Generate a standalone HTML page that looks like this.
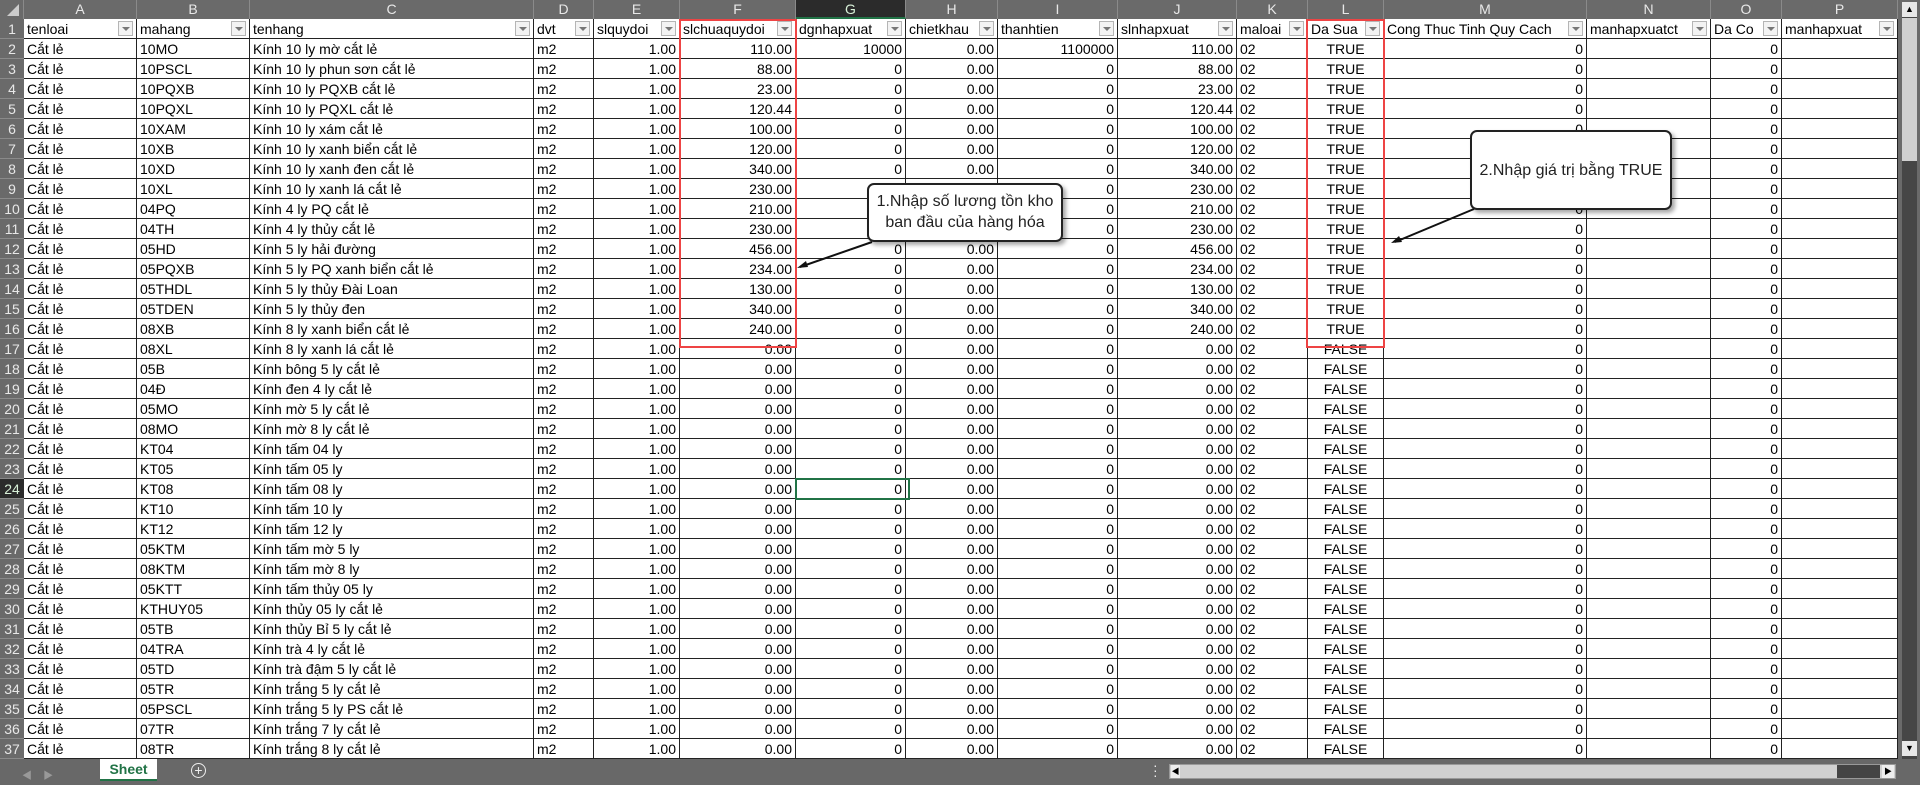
<!DOCTYPE html>
<html><head><meta charset="utf-8">
<style>
body{margin:0;width:1920px;height:785px;overflow:hidden;background:#fff;position:relative;font-family:"Liberation Sans","Noto Sans CJK SC",sans-serif;}
.c{position:absolute;box-sizing:border-box;height:20px;line-height:20px;font-size:14px;color:#000;white-space:nowrap;overflow:hidden;padding:0 3px;border-right:1px solid #222;border-bottom:1px solid #222;}
.r{text-align:right}.m{text-align:center}
.ch{position:absolute;top:0;height:19px;line-height:19px;background:#6a6a6a;color:#e8e8e8;font-size:14px;text-align:center;box-sizing:border-box;border-right:1px solid #8a8a8a;font-family:"Liberation Sans",sans-serif}
.rh{position:absolute;left:0;width:24px;height:20px;line-height:20px;background:#6a6a6a;color:#e8e8e8;font-size:14px;text-align:center;box-sizing:border-box;border-bottom:1px solid #8a8a8a;font-family:"Liberation Sans",sans-serif}
.fb{position:absolute;top:2px;width:15px;height:15px;border:1px solid #b5b5b5;background:#f3f3f3;box-sizing:border-box}
.fb:after{content:"";position:absolute;left:3px;top:5px;border-left:4px solid transparent;border-right:4px solid transparent;border-top:4px solid #777}
.call{position:absolute;background:#fff;border:2px solid #222;border-radius:7px;box-shadow:3px 3px 4px rgba(0,0,0,.35);font-family:"Liberation Sans",sans-serif;font-size:16px;color:#222;text-align:center;box-sizing:border-box}
</style></head><body>
<div id="g"></div>
<div style="position:absolute;left:679px;top:19px;width:118px;height:329px;border:2px solid #ee4444;box-sizing:border-box"></div>
<div style="position:absolute;left:1306px;top:19px;width:79px;height:329px;border:2px solid #ee4444;box-sizing:border-box"></div>
<div style="position:absolute;left:795px;top:478px;width:115px;height:22px;border:2px solid #217346;box-sizing:border-box"></div>
<svg style="position:absolute;left:0;top:0" width="1920" height="785">
<line x1="872" y1="242" x2="800" y2="267" stroke="#111" stroke-width="2"/>
<polygon points="797,268 806,261 808,267" fill="#111"/>
<line x1="1474" y1="209" x2="1395" y2="242" stroke="#111" stroke-width="2"/>
<polygon points="1391,243 1399,236 1402,242" fill="#111"/>
</svg>
<div class="call" style="left:867px;top:183px;width:196px;height:59px;padding-top:6px;line-height:21px">1.Nhập số lương tồn kho<br>ban đầu của hàng hóa</div>
<div class="call" style="left:1470px;top:130px;width:202px;height:80px;line-height:78px">2.Nhập giá trị bằng TRUE</div>
<div style="position:absolute;left:0;top:759px;width:1920px;height:26px;background:#686868"></div>
<div style="position:absolute;left:22px;top:767px;color:#999;font-size:10px">&#9664;&nbsp;&nbsp;&nbsp;&nbsp;&#9654;</div>
<div style="position:absolute;left:100px;top:759px;width:57px;height:22px;background:#fff;border-bottom:2px solid #217346;box-sizing:border-box;color:#217346;font-weight:bold;font-size:14px;text-align:center;line-height:20px;font-family:'Liberation Sans',sans-serif">Sheet</div>
<div style="position:absolute;left:191px;top:763px;width:13px;height:13px;border:1.5px solid #eee;border-radius:50%;color:#eee;font-size:14px;line-height:13px;text-align:center;font-family:'Liberation Sans',sans-serif">+</div>
<div style="position:absolute;left:1153px;top:763px;color:#eee;font-size:14px;line-height:5px">·<br>·<br>·</div>
<div style="position:absolute;left:1169px;top:764px;width:727px;height:15px;background:#d0d0d0;border:1px solid #999;box-sizing:border-box"></div>
<div style="position:absolute;left:1837px;top:765px;width:43px;height:13px;background:#444"></div>
<div style="position:absolute;left:1171px;top:765px;width:9px;height:13px;background:#eee;font-size:8px;line-height:13px;text-align:center">&#9664;</div>
<div style="position:absolute;left:1882px;top:765px;width:12px;height:13px;background:#eee;font-size:8px;line-height:13px;text-align:center">&#9654;</div>
<div style="position:absolute;left:1898px;top:0;width:22px;height:759px;background:#6a6a6a"></div>
<div style="position:absolute;left:1902px;top:2px;width:15px;height:757px;background:#464646"></div>
<div style="position:absolute;left:1902px;top:2px;width:15px;height:15px;background:#e8e8e8;font-size:9px;line-height:15px;text-align:center">&#9650;</div>
<div style="position:absolute;left:1902px;top:18px;width:15px;height:143px;background:#d0d0d0"></div>
<div style="position:absolute;left:1902px;top:741px;width:15px;height:15px;background:#e8e8e8;font-size:9px;line-height:15px;text-align:center">&#9660;</div>
<script>
var X=[24,137,250,534,594,680,796,906,998,1118,1237,1308,1384,1587,1711,1782,1898];
var L="ABCDEFGHIJKLMNOP";
var H=["tenloai","mahang","tenhang","dvt","slquydoi","slchuaquydoi","dgnhapxuat","chietkhau","thanhtien","slnhapxuat","maloai","Da Sua","Cong Thuc Tinh Quy Cach","manhapxuatct","Da Co","manhapxuat"];
var D=[["10MO","Kính 10 ly mờ cắt lẻ","110.00"],["10PSCL","Kính 10 ly phun sơn cắt lẻ","88.00"],["10PQXB","Kính 10 ly PQXB cắt lẻ","23.00"],["10PQXL","Kính 10 ly PQXL cắt lẻ","120.44"],["10XAM","Kính 10 ly xám cắt lẻ","100.00"],["10XB","Kính 10 ly xanh biển cắt lẻ","120.00"],["10XD","Kính 10 ly xanh đen cắt lẻ","340.00"],["10XL","Kính 10 ly xanh lá cắt lẻ","230.00"],["04PQ","Kính 4 ly PQ cắt lẻ","210.00"],["04TH","Kính 4 ly thủy cắt lẻ","230.00"],["05HD","Kính 5 ly hải đường","456.00"],["05PQXB","Kính 5 ly PQ xanh biển cắt lẻ","234.00"],["05THDL","Kính 5 ly thủy Đài Loan","130.00"],["05TDEN","Kính 5 ly thủy đen","340.00"],["08XB","Kính 8 ly xanh biển cắt lẻ","240.00"],["08XL","Kính 8 ly xanh lá cắt lẻ"],["05B","Kính bông 5 ly cắt lẻ"],["04Đ","Kính đen 4 ly cắt lẻ"],["05MO","Kính mờ 5 ly cắt lẻ"],["08MO","Kính mờ 8 ly cắt lẻ"],["KT04","Kính tấm 04 ly"],["KT05","Kính tấm 05 ly"],["KT08","Kính tấm 08 ly"],["KT10","Kính tấm 10 ly"],["KT12","Kính tấm 12 ly"],["05KTM","Kính tấm mờ 5 ly"],["08KTM","Kính tấm mờ 8 ly"],["05KTT","Kính tấm thủy 05 ly"],["KTHUY05","Kính thủy 05 ly cắt lẻ"],["05TB","Kính thủy Bỉ 5 ly cắt lẻ"],["04TRA","Kính trà 4 ly cắt lẻ"],["05TD","Kính trà đậm 5 ly cắt lẻ"],["05TR","Kính trắng 5 ly cắt lẻ"],["05PSCL","Kính trắng 5 ly PS cắt lẻ"],["07TR","Kính trắng 7 ly cắt lẻ"],["08TR","Kính trắng 8 ly cắt lẻ"]];
var h='<div class="ch" style="left:0;width:24px"><svg width="24" height="19" style="position:absolute;left:0;top:0"><polygon points="19,4 19,16 7,16" fill="#ccc"/></svg></div>';
for(var i=0;i<16;i++){var w=X[i+1]-X[i];var sel=i==6;h+='<div class="ch" style="left:'+X[i]+'px;width:'+w+'px;'+(sel?'background:#2b2b2b;color:#d8f0d8;border-bottom:2px solid #217346':'')+'">'+L[i]+'</div>';}
for(var r=1;r<=37;r++){var t=19+(r-1)*20;h+='<div class="rh" style="top:'+t+'px;'+(r==24?'background:#2b2b2b;color:#d8f0d8':'')+'">'+r+'</div>';
 var v;
 if(r==1){v=H}else{var d=D[r-2];var q=d[2]||"0.00";var tr=r<=16;v=["Cắt lẻ",d[0],d[1],"m2","1.00",q,r==2?"10000":"0","0.00",r==2?"1100000":"0",q,"02",tr?"TRUE":"FALSE","0","","0",""];}
 for(var i=0;i<16;i++){var w=X[i+1]-X[i];var cls="c";if(r>1){if([4,5,6,7,8,9,12,14].indexOf(i)>=0)cls+=" r";if(i==11)cls+=" m";}
  h+='<div class="'+cls+'" style="left:'+X[i]+'px;top:'+t+'px;width:'+w+'px">'+v[i]+'</div>';
  if(r==1)h+='<div class="fb" style="left:'+(X[i+1]-19)+'px;top:'+(t+2)+'px"></div>';}
}
document.getElementById('g').innerHTML=h;
</script>
</body></html>
